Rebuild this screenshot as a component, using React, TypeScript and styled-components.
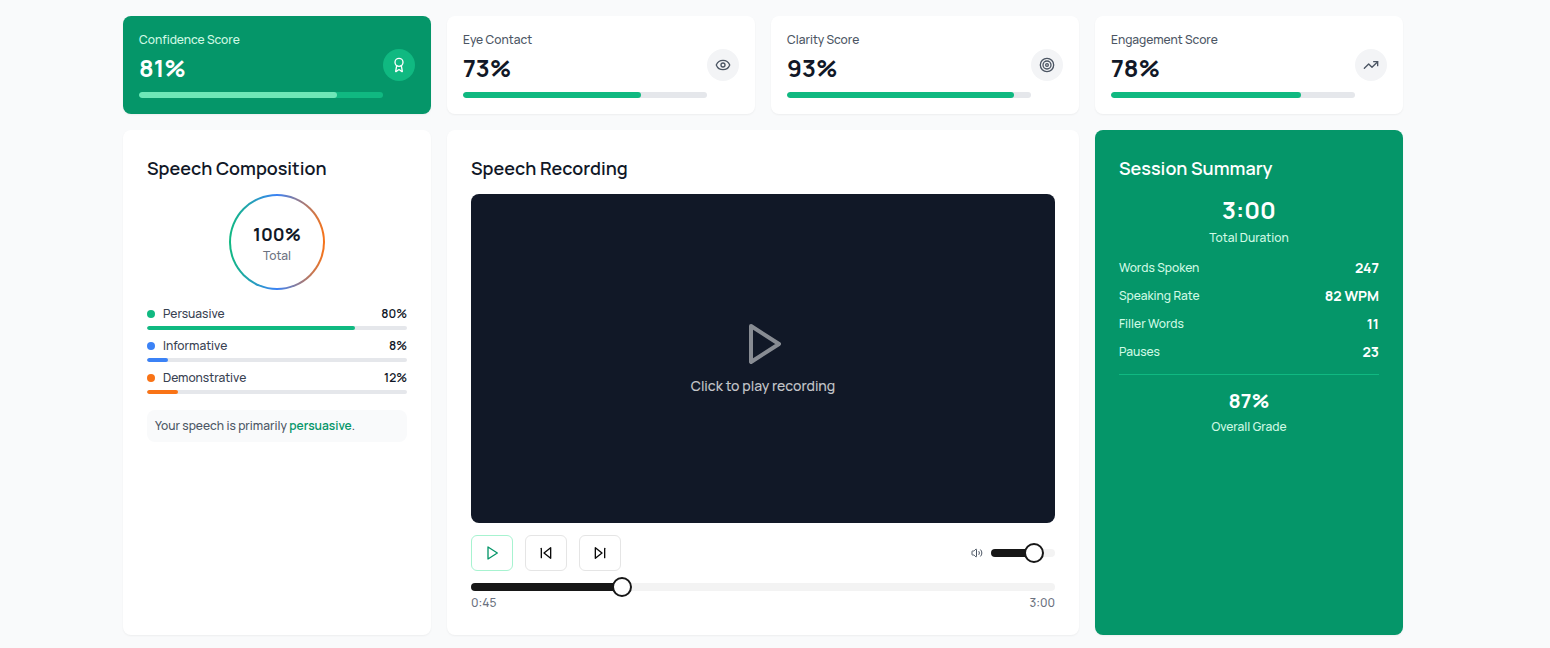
import React, { useState } from "react";
import styled, { createGlobalStyle } from "styled-components";
import { Award, Eye, Target, TrendingUp, Volume2 } from "lucide-react";

const GlobalStyle = createGlobalStyle`
  *, *::before, *::after { box-sizing: border-box; }
  body {
    margin: 0;
    background: #f9fafb;
    color: #111827;
    font-family: Manrope, Inter, "Liberation Sans", sans-serif;
    font-size: 12px;
    line-height: 16px;
    font-weight: 500;
  }
  h2, p, dl, dd, ul { margin: 0; padding: 0; }
  button, input { font: inherit; margin: 0; }
`;

const Page = styled.main`
  padding: 16px 24px 12px 0;
`;

const Dashboard = styled.div`
  display: grid;
  grid-template-columns: repeat(4, minmax(0, 1fr));
  gap: 16px;
  max-width: 1280px;
  margin: 0 auto;
`;

const Card = styled.section<{ $green?: boolean; $wide?: boolean }>`
  grid-column: span ${(p) => (p.$wide ? 2 : 1)};
  padding: 24px;
  border-radius: 8px;
  background: ${(p) => (p.$green ? "#059669" : "#ffffff")};
  color: ${(p) => (p.$green ? "#ffffff" : "#111827")};
  box-shadow: 0 1px 2px rgba(0, 0, 0, 0.05);
`;

const ScoreCard = styled(Card)`
  display: flex;
  align-items: center;
  padding: 16px;
`;

const ScoreBody = styled.div`
  flex: 1;
  min-width: 0;
`;

const ScoreLabel = styled.p<{ $green?: boolean }>`
  color: ${(p) => (p.$green ? "#d1fae5" : "#4b5563")};
`;

const ScoreValue = styled.p`
  margin: 4px 0 8px;
  font-size: 24px;
  line-height: 32px;
  font-weight: 700;
`;

const IconCircle = styled.span<{ $green?: boolean }>`
  display: flex;
  align-items: center;
  justify-content: center;
  width: 32px;
  height: 32px;
  border-radius: 50%;
  background: ${(p) => (p.$green ? "#10b981" : "#f3f4f6")};
  color: ${(p) => (p.$green ? "#ffffff" : "#4b5563")};
`;

const Track = styled.div<{ $height: number; $color?: string }>`
  height: ${(p) => p.$height}px;
  border-radius: 4px;
  background: ${(p) => p.$color ?? "#e5e7eb"};
  overflow: hidden;
`;

const Fill = styled.div<{ $color: string }>`
  height: 100%;
  border-radius: 4px;
  background: ${(p) => p.$color};
`;

const Title = styled.h2`
  margin-bottom: 12px;
  font-size: 18px;
  line-height: 28px;
  font-weight: 600;
`;

const Ring = styled.div`
  width: 96px;
  height: 96px;
  margin: 0 auto 16px;
  padding: 2px;
  border-radius: 50%;
  background: linear-gradient(to right, #10b981, #3b82f6, #f97316);
`;

const RingInner = styled.div`
  display: flex;
  flex-direction: column;
  align-items: center;
  justify-content: center;
  height: 100%;
  border-radius: 50%;
  background: #ffffff;
`;

const RingValue = styled.span`
  font-size: 18px;
  line-height: 28px;
  font-weight: 700;
`;

const Muted = styled.span`
  color: #6b7280;
`;

const Parts = styled.ul`
  display: flex;
  flex-direction: column;
  gap: 8px;
  margin-bottom: 16px;
  list-style: none;
`;

const PartHead = styled.div`
  display: flex;
  align-items: center;
  gap: 8px;
  margin-bottom: 4px;
  color: #374151;
`;

const Dot = styled.span<{ $color: string }>`
  width: 8px;
  height: 8px;
  border-radius: 50%;
  background: ${(p) => p.$color};
`;

const PartValue = styled.span`
  margin-left: auto;
  color: #111827;
  font-weight: 600;
`;

const Note = styled.p`
  padding: 8px;
  border-radius: 8px;
  background: #f9fafb;
  color: #4b5563;

  strong {
    color: #059669;
    font-weight: 600;
  }
`;

const Video = styled.button`
  display: flex;
  flex-direction: column;
  align-items: center;
  justify-content: center;
  gap: 8px;
  width: 100%;
  aspect-ratio: 16 / 9;
  padding: 0;
  border: 0;
  border-radius: 8px;
  background: #111827;
  color: #ffffff;
  font-size: 14px;
  line-height: 20px;
  font-weight: 500;
  cursor: pointer;

  svg { opacity: 0.5; }
  span { opacity: 0.75; }
`;

const Controls = styled.div`
  display: flex;
  align-items: center;
  gap: 12px;
  margin: 12px 0;
`;

const ControlButton = styled.button<{ $primary?: boolean }>`
  display: flex;
  align-items: center;
  justify-content: center;
  width: 42px;
  height: 36px;
  padding: 0;
  border: 1px solid ${(p) => (p.$primary ? "#a7f3d0" : "#e5e5e5")};
  border-radius: 6px;
  background: #ffffff;
  color: ${(p) => (p.$primary ? "#059669" : "#0a0a0a")};
  cursor: pointer;
`;

const Volume = styled.label`
  display: flex;
  align-items: center;
  gap: 8px;
  width: 84px;
  margin-left: auto;
  color: #4b5563;

  svg { flex: none; }
`;

const Slider = styled.input`
  display: block;
  appearance: none;
  width: 100%;
  min-width: 0;
  height: 8px;
  border-radius: 4px;
  outline: none;
  cursor: pointer;

  &::-webkit-slider-thumb {
    appearance: none;
    width: 20px;
    height: 20px;
    border: 2px solid #171717;
    border-radius: 50%;
    background: #ffffff;
  }
`;

const Times = styled.div`
  display: flex;
  justify-content: space-between;
  margin-top: 4px;
  color: #6b7280;
`;

const Headline = styled.div`
  display: flex;
  flex-direction: column;
  align-items: center;
  gap: 4px;
  color: #d1fae5;
`;

const HeadlineValue = styled.strong<{ $large?: boolean }>`
  color: #ffffff;
  font-size: ${(p) => (p.$large ? 24 : 20)}px;
  line-height: ${(p) => (p.$large ? 32 : 28)}px;
  font-weight: 700;
`;

const Stats = styled.dl`
  display: flex;
  flex-direction: column;
  gap: 8px;
  margin: 12px 0;
  padding-bottom: 12px;
  border-bottom: 1px solid #10b981;
`;

const Stat = styled.div`
  display: flex;
  align-items: center;
  justify-content: space-between;

  dt { color: #d1fae5; }
  dd { font-size: 14px; line-height: 20px; font-weight: 700; }
`;

const PlayIcon = ({ size }: { size: number }) => (
  <Glyph size={size}>
    <polygon points="6 3 20 12 6 21 6 3" />
  </Glyph>
);

function Glyph({ size, children }: { size: number; children: React.ReactNode }) {
  return (
    <svg
      width={size}
      height={size}
      viewBox="0 0 24 24"
      fill="none"
      stroke="currentColor"
      strokeWidth="2"
      strokeLinecap="round"
      strokeLinejoin="round"
      aria-hidden="true"
    >
      {children}
    </svg>
  );
}

const scores = [
  { label: "Confidence Score", value: 81, Icon: Award, green: true },
  { label: "Eye Contact", value: 73, Icon: Eye },
  { label: "Clarity Score", value: 93, Icon: Target },
  { label: "Engagement Score", value: 78, Icon: TrendingUp },
];

const parts = [
  { label: "Persuasive", value: 80, color: "#10b981" },
  { label: "Informative", value: 8, color: "#3b82f6" },
  { label: "Demonstrative", value: 12, color: "#f97316" },
];

const stats = [
  ["Words Spoken", "247"],
  ["Speaking Rate", "82 WPM"],
  ["Filler Words", "11"],
  ["Pauses", "23"],
];

const DURATION = 180;

const formatTime = (s: number) =>
  `${Math.floor(s / 60)}:${String(s % 60).padStart(2, "0")}`;

const rangeFill = (ratio: number) => ({
  background: `linear-gradient(to right, #171717 ${ratio * 100}%, #f3f3f3 ${ratio * 100}%)`,
});

export default function App() {
  const [time, setTime] = useState(45);
  const [volume, setVolume] = useState(75);

  return (
    <>
      <GlobalStyle />
      <Page>
        <Dashboard>
          {scores.map(({ label, value, Icon, green }) => (
            <ScoreCard key={label} $green={green}>
              <ScoreBody>
                <ScoreLabel $green={green}>{label}</ScoreLabel>
                <ScoreValue>{value}%</ScoreValue>
                <Track $height={6} $color={green ? "#10b981" : undefined}>
                  <Fill $color={green ? "#6ee7b7" : "#10b981"} style={{ width: `${value}%` }} />
                </Track>
              </ScoreBody>
              <IconCircle $green={green}>
                <Icon size={16} />
              </IconCircle>
            </ScoreCard>
          ))}

          <Card>
            <Title>Speech Composition</Title>
            <Ring>
              <RingInner>
                <RingValue>100%</RingValue>
                <Muted>Total</Muted>
              </RingInner>
            </Ring>
            <Parts>
              {parts.map((part) => (
                <li key={part.label}>
                  <PartHead>
                    <Dot $color={part.color} />
                    <span>{part.label}</span>
                    <PartValue>{part.value}%</PartValue>
                  </PartHead>
                  <Track $height={4}>
                    <Fill $color={part.color} style={{ width: `${part.value}%` }} />
                  </Track>
                </li>
              ))}
            </Parts>
            <Note>
              Your speech is primarily <strong>persuasive</strong>.
            </Note>
          </Card>

          <Card $wide>
            <Title>Speech Recording</Title>
            <Video type="button">
              <PlayIcon size={48} />
              <span>Click to play recording</span>
            </Video>
            <Controls>
              <ControlButton type="button" $primary aria-label="Play">
                <PlayIcon size={16} />
              </ControlButton>
              <ControlButton type="button" aria-label="Skip back">
                <Glyph size={16}>
                  <polygon points="19 20 9 12 19 4 19 20" />
                  <line x1="5" x2="5" y1="19" y2="5" />
                </Glyph>
              </ControlButton>
              <ControlButton type="button" aria-label="Skip forward">
                <Glyph size={16}>
                  <polygon points="5 4 15 12 5 20 5 4" />
                  <line x1="19" x2="19" y1="5" y2="19" />
                </Glyph>
              </ControlButton>
              <Volume>
                <Volume2 size={12} />
                <Slider
                  type="range"
                  aria-label="Volume"
                  min={0}
                  max={100}
                  value={volume}
                  onChange={(e) => setVolume(Number(e.target.value))}
                  style={rangeFill(volume / 100)}
                />
              </Volume>
            </Controls>
            <Slider
              type="range"
              aria-label="Position"
              min={0}
              max={DURATION}
              value={time}
              onChange={(e) => setTime(Number(e.target.value))}
              style={rangeFill(time / DURATION)}
            />
            <Times>
              <span>{formatTime(time)}</span>
              <span>{formatTime(DURATION)}</span>
            </Times>
          </Card>

          <Card $green>
            <Title>Session Summary</Title>
            <Headline>
              <HeadlineValue $large>3:00</HeadlineValue>
              <span>Total Duration</span>
            </Headline>
            <Stats>
              {stats.map(([label, value]) => (
                <Stat key={label}>
                  <dt>{label}</dt>
                  <dd>{value}</dd>
                </Stat>
              ))}
            </Stats>
            <Headline>
              <HeadlineValue>87%</HeadlineValue>
              <span>Overall Grade</span>
            </Headline>
          </Card>
        </Dashboard>
      </Page>
    </>
  );
}
